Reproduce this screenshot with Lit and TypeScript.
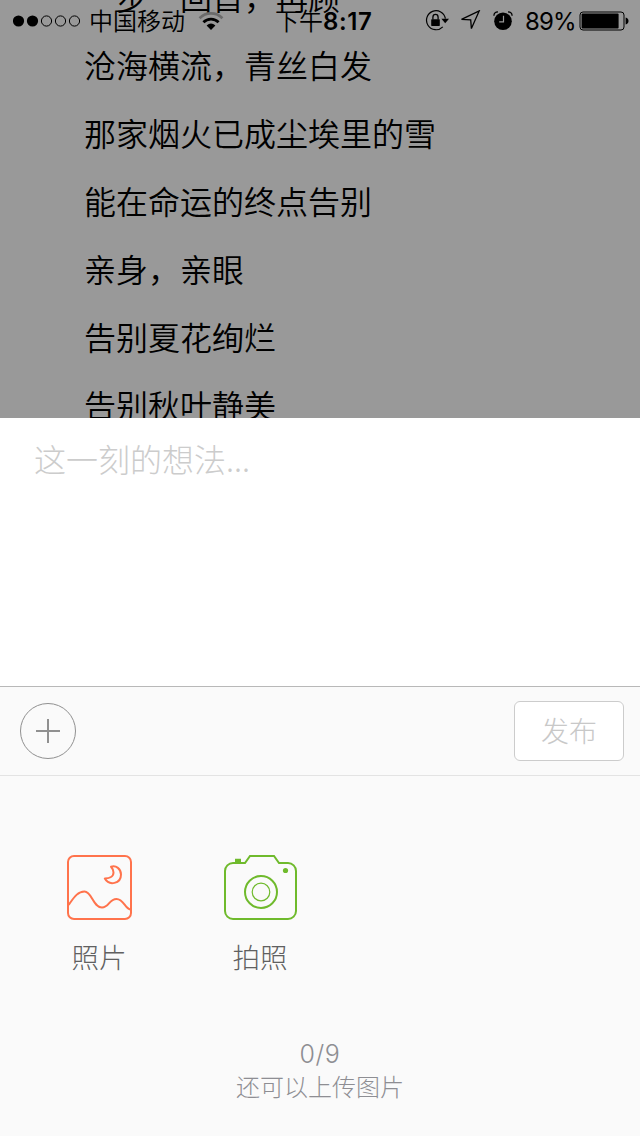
import { LitElement, html, css, svg } from "lit";
import { customElement, property } from "lit/decorators.js";

const LYRICS = [
  "一步一回首，再顾",
  "沧海横流，青丝白发",
  "那家烟火已成尘埃里的雪",
  "能在命运的终点告别",
  "亲身，亲眼",
  "告别夏花绚烂",
  "告别秋叶静美",
];

@customElement("status-bar")
class StatusBar extends LitElement {
  static styles = css`
    :host {
      display: flex;
      align-items: center;
      justify-content: space-between;
      height: 41px;
      box-sizing: border-box;
      padding: 0 11px 0 13px;
      font: 350 24px/42px Inter, "Noto Sans CJK SC DemiLight", "Noto Sans CJK SC", sans-serif;
      color: #000;
    }
    svg { display: block; flex: none; }
    .left, .right { display: flex; align-items: center; height: 41px; }
    .left { width: 262px; }
    .carrier { margin-left: 8px; width: 97px; white-space: nowrap; padding-top: 3px; }
    .wifi { margin-left: 12px; }
    .time { width: 100px; margin-right: 50px; white-space: nowrap; padding-top: 2px; }
    .digits { font-weight: 600; font-size: 24px; letter-spacing: 0.6px; }
    .right { width: 204px; }
    .arrow { margin-left: 11px; }
    .alarm { margin-left: 12px; }
    .percent { margin-left: 12px; width: 54px; font-weight: 400; font-size: 24px; letter-spacing: -0.9px; white-space: nowrap; padding-top: 2px; }
  `;

  render() {
    return html`
      <div class="left">
        <svg width="68" height="14" viewBox="0 0 68 14">
          ${[0, 1, 2, 3, 4].map(
            (i) => svg`<circle cx=${5.5 + i * 14} cy="7" r=${i < 2 ? 5.6 : 5.1}
              fill=${i < 2 ? "#000" : "none"} stroke="#000" stroke-width=${i < 2 ? 0 : 1}></circle>`
          )}
        </svg>
        <span class="carrier">中国移动</span>
        <svg class="wifi" width="26" height="20" viewBox="0 0 26 20">
          <g fill="none" stroke-width="2.7">
            <path d="M1.6 7.2A16 16 0 0 1 24.4 7.2" stroke="#6b6b6b"></path>
            <path d="M5.4 11.3A10.8 10.8 0 0 1 20.6 11.3" stroke="#000"></path>
          </g>
          <path d="M13 19L8.6 14.5Q13 10.6 17.4 14.5Z"></path>
        </svg>
      </div>
      <span class="time">下午<span class="digits">8:17</span></span>
      <div class="right">
        <svg width="24" height="22" viewBox="0 0 24 22">
          <path d="M20.4 8.7A9.5 9.5 0 1 0 17.8 16.9" fill="none" stroke="#000" stroke-width="1.2"></path>
          <path d="M16.400 8.800H24L20.200 13.200Z"></path>
          <rect x="6.200" y="9.200" width="8.600" height="6.700" rx=".6"></rect>
          <path d="M7.900 9.500V7.200a2.600 2.800 0 0 1 5.200 0V9.500" fill="none" stroke="#000" stroke-width="1.300"></path>
        </svg>
        <svg class="arrow" width="21" height="21" viewBox="0 0 21 21">
          <path d="M1.5 9.4L19.2 0.9L11.4 18.6L10.7 9.8Z" fill="none" stroke="#000" stroke-width="1.3"></path>
        </svg>
        <svg class="alarm" width="20" height="20" viewBox="0 0 20 20">
          <circle cx="10" cy="10.200" r="8.800"></circle>
          <path d="M.9 4.800Q1 .9 5 .9M19.100 4.800Q19 .9 15 .9" fill="none" stroke="#000" stroke-width="1.300"></path>
          <path d="M10.500 4.800V10.800H6.200" fill="none" stroke="#999" stroke-width="1.200"></path>
        </svg>
        <span class="percent">89%</span>
        <svg width="50" height="20" viewBox="0 0 50 20">
          <rect x="1" y="1" width="44" height="18" rx="3" fill="none" stroke="#000"></rect>
          <rect x="2.600" y="2.600" width="37" height="14.800" rx="1"></rect>
          <path d="M46.600 6.600Q49.500 7.200 49.500 10T46.600 13.400Z"></path>
        </svg>
      </div>
    `;
  }
}

@customElement("attach-option")
class AttachOption extends LitElement {
  @property() label = "";
  static styles = css`
    :host { display: flex; flex-direction: column; align-items: center; width: 80px; }
    .label { margin-top: 16px; font-size: 27.5px; line-height: 40px; color: #606060; }
  `;
  render() {
    return html`<slot></slot><span class="label">${this.label}</span>`;
  }
}

@customElement("app-root")
class AppRoot extends LitElement {
  static styles = css`
    :host {
      display: flex;
      flex-direction: column;
      width: 640px;
      height: 1136px;
      overflow: hidden;
      position: relative;
      background: #fafafa;
      font-family: "Noto Sans CJK SC", sans-serif;
      font-weight: 300;
    }
    svg { display: block; }
    status-bar { position: absolute; inset: 0 0 auto 0; }
    .lyrics {
      flex: none;
      height: 418px;
      overflow: hidden;
      background: #999;
      color: #000;
      font-family: "Noto Sans CJK SC DemiLight", "Noto Sans CJK SC", sans-serif;
      font-size: 32px;
      line-height: 68px;
      font-weight: 350;
    }
    .line { height: 68px; padding-left: 84px; white-space: nowrap; }
    .line:first-child { margin-top: -38px; }
    .editor {
      flex: none;
      box-sizing: border-box;
      height: 268px;
      padding: 16px 34px;
      background: #fff;
      color: #ccc;
      font-size: 32px;
      line-height: 48px;
    }
    .toolbar {
      flex: none;
      box-sizing: border-box;
      height: 90px;
      display: flex;
      justify-content: space-between;
      align-items: center;
      padding: 0 16px 0 20px;
      border-top: 1px solid #b8b8b8;
      border-bottom: 1px solid #e3e3e3;
    }
    .publish {
      box-sizing: border-box;
      width: 110px;
      height: 60px;
      border: 1px solid #ccc;
      border-radius: 6px;
      background: #fff;
      color: #c8c8c8;
      font-size: 28px;
      line-height: 57px;
      text-align: center;
    }
    .options { display: flex; gap: 81px; padding: 78px 0 0 59px; }
    .hint {
      margin-top: 61px;
      text-align: center;
      color: #8e8e93;
      font-size: 24px;
      line-height: 34px;
    }
    .count { height: 32px; font-family: Inter, sans-serif; font-weight: 300; font-size: 25px; letter-spacing: 0.6px; }
  `;

  render() {
    return html`
      <div class="lyrics">${LYRICS.map((l) => html`<div class="line">${l}</div>`)}</div>
      <status-bar></status-bar>
      <div class="editor">这一刻的想法...</div>
      <div class="toolbar">
        <svg width="56" height="56" viewBox="0 0 56 56" fill="none" stroke="#909090">
          <circle cx="28" cy="28" r="27.5"></circle>
          <path d="M28 16V40M16 28H40" stroke-width="2"></path>
        </svg>
        <div class="publish">发布</div>
      </div>
      <div class="options">
        <attach-option label="照片">
          <svg width="66" height="66" viewBox="0 0 66 66" fill="none" stroke="#ff734c" stroke-width="2">
            <rect x="2" y="2" width="63" height="63" rx="6"></rect>
            <path d="M2.5 51C7 45 11 37.5 18.5 37.500C26 37.500 27 53.500 36 53.500C43 53.500 43 45 50.500 45C58 45 59 55.500 65 55.500"></path>
            <path d="M45 12.800C50 11 55 15 55 20.500C55 30 43 32 38.800 24.500C42.500 24.500 47.500 23 47.500 18.500Q47.500 15.500 45 12.800Z" stroke-linejoin="round"></path>
          </svg>
        </attach-option>
        <attach-option label="拍照">
          <svg width="74" height="66" viewBox="0 0 74 66" fill="none" stroke="#6fba2c" stroke-width="2">
            <path d="M10 9H22L27 2H51L56 9H65A8 8 0 0 1 73 17V57A8 8 0 0 1 65 65H10A8 8 0 0 1 2 57V17A8 8 0 0 1 10 9Z"></path>
            <path d="M12 6.500H18" stroke-width="3.500"></path>
            <circle cx="38" cy="38" r="16"></circle>
            <circle cx="38" cy="38" r="8.800" stroke-width="1.200"></circle>
            <circle cx="62.500" cy="16.500" r="2.600" fill="#6fba2c" stroke="none"></circle>
          </svg>
        </attach-option>
      </div>
      <div class="hint">
        <div class="count">0/9</div>
        <div>还可以上传图片</div>
      </div>
    `;
  }
}
